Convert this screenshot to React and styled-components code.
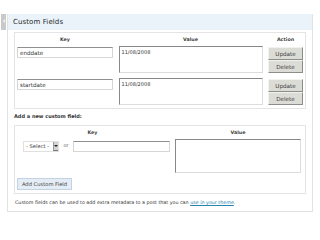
import styled, { createGlobalStyle } from "styled-components"

const GlobalStyle = createGlobalStyle`
    body {
        margin: 0;
        background: #fff;
        font-family: 'DejaVu Sans', Verdana, sans-serif;
        color: #333;
    }
`

const rows = [
    { key: "enddate", value: "11/08/2008" },
    { key: "startdate", value: "11/08/2008" },
]

export default function App() {
    return (
        <>
            <GlobalStyle />
            <Page>
                <Handle><span /></Handle>
                <Box>
                    <Header>Custom Fields</Header>
                    <Body>
                        <Panel>
                            <MetaGrid>
                                <HeadCell>Key</HeadCell>
                                <HeadCell>Value</HeadCell>
                                <HeadCell>Action</HeadCell>
                                {rows.map((r) => (
                                    <Row key={r.key}>
                                        <KeyInput defaultValue={r.key} />
                                        <ValueArea defaultValue={r.value} $h={27} />
                                        <Actions>
                                            <Button>Update</Button>
                                            <Button>Delete</Button>
                                        </Actions>
                                    </Row>
                                ))}
                            </MetaGrid>
                        </Panel>

                        <SubTitle>Add a new custom field:</SubTitle>

                        <Panel $bottom={3}>
                            <NewGrid>
                                <HeadCell>Key</HeadCell>
                                <HeadCell>Value</HeadCell>
                                <KeyCell>
                                    <Select>
                                        <span>- Select -</span>
                                        <Arrow />
                                    </Select>
                                    <Or>or</Or>
                                    <KeyInput $w={97} />
                                </KeyCell>
                                <ValueArea $h={34} />
                            </NewGrid>
                            <AddButton>Add Custom Field</AddButton>
                        </Panel>

                        <Note>
                            Custom fields can be used to add extra metadata to a post that you can <a href="#">use in your theme</a>.
                        </Note>
                    </Body>
                </Box>
            </Page>
        </>
    )
}

const Page = styled.div`
    display: flex;
    align-items: flex-start;
    padding: 14px 0 0 1px;
`

const Handle = styled.div`
    width: 5px;
    height: 16px;
    background: #c9c9c9;
    display: flex;
    justify-content: center;
    padding-top: 5px;
    box-sizing: border-box;
    margin-right: 1px;

    & > span {
        width: 0;
        height: 0;
        border-top: 2px solid transparent;
        border-bottom: 2px solid transparent;
        border-right: 2px solid #f4f4f4;
    }
`

const Box = styled.div`
    width: 306px;
    border: 1px solid #e2e2e2;
    border-top: none;
    box-sizing: border-box;
`

const Header = styled.div`
    height: 16px;
    line-height: 16px;
    background: #eaf3fa;
    padding-left: 5px;
    font-size: 7px;
    letter-spacing: 0.1px;
    color: #2a2a2a;
`

const Body = styled.div`
    padding: 2px 6px 0 6px;
`

const Panel = styled.div`
    width: 292px;
    border: 1px solid #e4e4e4;
    box-sizing: border-box;
    padding-bottom: ${(p) => p.$bottom ?? 3}px;
`

const MetaGrid = styled.div`
    display: grid;
    grid-template-columns: 96px 144px 35px;
    column-gap: 5px;
    row-gap: 5px;
    padding: 0 2px;
    justify-content: space-between;
`

const Row = styled.div`
    display: contents;
`

const HeadCell = styled.div`
    height: 13px;
    line-height: 13px;
    text-align: center;
    font-size: 4.8px;
    font-weight: bold;
    color: #444;
    margin-bottom: -5px;
`

const KeyInput = styled.input`
    width: ${(p) => p.$w ?? 96}px;
    height: 11px;
    margin-top: 1px;
    box-sizing: border-box;
    border: 1px solid #d6d6d6;
    border-top-color: #8f8f8f;
    padding: 0 2px;
    font-family: 'DejaVu Sans', Verdana, sans-serif;
    font-size: 5.6px;
    color: #333;
    outline: none;
`

const ValueArea = styled.textarea`
    width: 100%;
    height: ${(p) => p.$h}px;
    box-sizing: border-box;
    border: 1px solid #dcdcdc;
    border-top-color: #888;
    border-left-color: #888;
    padding: 2px 2px;
    font-family: 'DejaVu Sans', Verdana, sans-serif;
    font-size: 5px;
    color: #333;
    resize: none;
    outline: none;
    display: block;
`

const Actions = styled.div`
    display: flex;
    flex-direction: column;
    padding-top: 1px;
`

const Button = styled.button`
    height: 13px;
    width: 35px;
    padding: 0;
    background: #dcdcd6;
    border: 1px solid #f2f2ee;
    border-right-color: #8c8c88;
    border-bottom-color: #8c8c88;
    font-family: 'DejaVu Sans', Verdana, sans-serif;
    font-size: 5.6px;
    color: #3c3c3c;
`

const SubTitle = styled.div`
    font-size: 5px;
    font-weight: bold;
    color: #333;
    height: 16px;
    line-height: 14px;
`

const NewGrid = styled.div`
    display: grid;
    grid-template-columns: 155px 126px;
    column-gap: 5px;
    row-gap: 5px;
    padding-right: 4px;
`

const KeyCell = styled.div`
    display: flex;
    align-items: center;
    height: 12px;
    padding-left: 8px;
    margin-top: 1px;
    align-self: start;

    & > input {
        margin-top: 0;
    }
`

const Select = styled.div`
    width: 36px;
    height: 11px;
    box-sizing: border-box;
    border: 1px solid #e0e0e0;
    display: flex;
    align-items: center;
    justify-content: space-between;
    padding-left: 2px;
    font-size: 5.2px;
    color: #444;
    background: #fff;
`

const Arrow = styled.span`
    width: 5px;
    height: 9px;
    background: #d4d4d4;
    border-left: 1px solid #999;
    border-bottom: 1px solid #777;
    box-sizing: border-box;
    position: relative;

    &::after {
        content: '';
        position: absolute;
        left: 0;
        top: 3px;
        border-left: 2px solid transparent;
        border-right: 2px solid transparent;
        border-top: 2px solid #222;
    }
`

const Or = styled.span`
    font-size: 5px;
    color: #666;
    width: 14px;
    text-align: center;
    margin-top: -3px;
`

const AddButton = styled.button`
    display: block;
    margin: 5px 0 0 2px;
    width: 55px;
    height: 12px;
    padding: 0;
    background: #e4edf5;
    border: 1px solid #c3d3e2;
    font-family: 'DejaVu Sans', Verdana, sans-serif;
    font-size: 5.2px;
    color: #444;
`

const Note = styled.div`
    font-size: 4.8px;
    color: #333;
    height: 17px;
    line-height: 17px;
    padding-left: 1px;

    & > a {
        color: #2583ad;
    }
`
